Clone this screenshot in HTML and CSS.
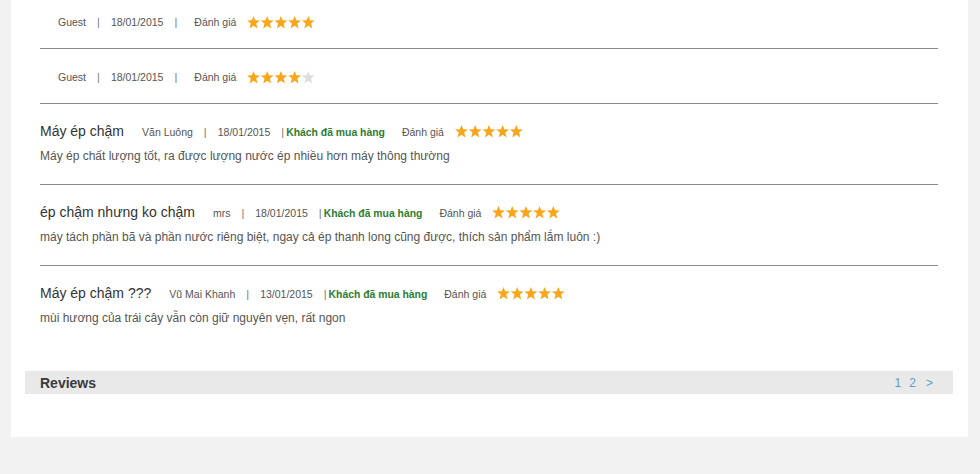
FILE: index.html
```html
<!DOCTYPE html>
<html lang="vi">
<head>
<meta charset="utf-8">
<title>Reviews</title>
<link rel="stylesheet" href="styles.css">
</head>
<body>
<div class="panel">
  <ul class="reviews">
    <li class="review guest first">
      <div class="head">
        <span class="meta indent">Guest</span>
        <span class="sep">|</span>
        <span class="meta">18/01/2015</span>
        <span class="buyer"><span class="bar">|</span></span>
        <span class="meta rate-label">Đánh giá</span>
        <svg class="stars" viewBox="0 0 68 13" width="68" height="13"><use href="#s5"/></svg>
      </div>
    </li>
    <li class="review guest">
      <div class="head">
        <span class="meta indent">Guest</span>
        <span class="sep">|</span>
        <span class="meta">18/01/2015</span>
        <span class="buyer"><span class="bar">|</span></span>
        <span class="meta rate-label">Đánh giá</span>
        <svg class="stars" viewBox="0 0 68 13" width="68" height="13"><use href="#s4"/></svg>
      </div>
    </li>
    <li class="review">
      <div class="head">
        <span class="title">Máy ép chậm</span>
        <span class="meta">Văn Luông</span>
        <span class="sep">|</span>
        <span class="meta">18/01/2015</span>
        <span class="buyer"><span class="bar">|</span>Khách đã mua hàng</span>
        <span class="meta rate-label">Đánh giá</span>
        <svg class="stars" viewBox="0 0 68 13" width="68" height="13"><use href="#s5"/></svg>
      </div>
      <p class="body">Máy ép chất lượng tốt, ra được lượng nước ép nhiều hơn máy thông thường</p>
    </li>
    <li class="review">
      <div class="head">
        <span class="title">ép chậm nhưng ko chậm</span>
        <span class="meta">mrs</span>
        <span class="sep">|</span>
        <span class="meta">18/01/2015</span>
        <span class="buyer"><span class="bar">|</span>Khách đã mua hàng</span>
        <span class="meta rate-label">Đánh giá</span>
        <svg class="stars" viewBox="0 0 68 13" width="68" height="13"><use href="#s5"/></svg>
      </div>
      <p class="body">máy tách phần bã và phần nước riêng biệt, ngay cả ép thanh long cũng được, thích sản phẩm lắm luôn :)</p>
    </li>
    <li class="review last">
      <div class="head">
        <span class="title">Máy ép chậm ???</span>
        <span class="meta">Vũ Mai Khanh</span>
        <span class="sep">|</span>
        <span class="meta">13/01/2015</span>
        <span class="buyer"><span class="bar">|</span>Khách đã mua hàng</span>
        <span class="meta rate-label">Đánh giá</span>
        <svg class="stars" viewBox="0 0 68 13" width="68" height="13"><use href="#s5"/></svg>
      </div>
      <p class="body">mùi hương của trái cây vẫn còn giữ nguyên vẹn, rất ngon</p>
    </li>
  </ul>
  <div class="reviews-bar">
    <span class="bar-title">Reviews</span>
    <nav class="pager"><a href="#">1</a><a href="#">2</a><a href="#" class="next">&gt;</a></nav>
  </div>
</div>

<svg width="0" height="0" class="defs">
  <defs>
    <polygon id="star" points="6.5,0 8.2,4.3 12.9,4.6 9.2,7.6 10.5,12.4 6.5,9.7 2.5,12.4 3.8,7.6 0.1,4.6 4.8,4.3"/>
    <g id="s5" fill="#f9a61b">
      <use href="#star" x="0"/><use href="#star" x="13.7"/><use href="#star" x="27.4"/><use href="#star" x="41.1"/><use href="#star" x="54.8"/>
    </g>
    <g id="s4">
      <g fill="#f9a61b"><use href="#star" x="0"/><use href="#star" x="13.7"/><use href="#star" x="27.4"/><use href="#star" x="41.1"/></g>
      <use href="#star" x="54.8" fill="#dedede"/>
    </g>
  </defs>
</svg>
</body>
</html>
```

FILE: styles.css
```css
html, body {
  margin: 0;
  padding: 0;
  background: #f2f2f2;
  font-family: Arial, "Liberation Sans", sans-serif;
  color: #555;
}

.panel {
  margin-left: 11px;
  width: 957px;
  background: #fff;
  padding: 0 15px 43px 14px;
  box-sizing: border-box;
}

.reviews {
  list-style: none;
  margin: 0 15px;
  padding: 0;
}

.review {
  padding: 19px 0 19px;
  border-bottom: 1px solid #8c8c8c;
}

.review.guest {
  padding: 20px 0 18px;
}

.review.first {
  padding-top: 14px;
}

.review.last {
  border-bottom: none;
}

.head {
  display: flex;
  align-items: baseline;
  height: 16px;
  line-height: 16px;
}

.title {
  font-size: 14px;
  color: #333;
  margin-right: 18px;
}

.meta {
  font-size: 10.5px;
  color: #555;
}

.indent {
  margin-left: 18px;
}

.sep {
  font-size: 11px;
  color: #777;
  margin: 0 11px 0 11px;
}

.buyer {
  font-size: 10.4px;
  font-weight: bold;
  color: #2e7d32;
}

.buyer .bar {
  font-weight: normal;
  font-size: 11px;
  color: #777;
  margin: 0 2px 0 11px;
}

.rate-label {
  margin-left: 17px;
}

.guest .rate-label {
  margin-left: 15px;
}

.stars {
  align-self: center;
  margin-left: 11px;
  display: block;
}

.body {
  margin: 8px 0 0;
  font-size: 12px;
  line-height: 18px;
  color: #555;
}

.reviews-bar {
  margin-top: 25px;
  height: 23px;
  background: #e9e9e9;
  display: flex;
  align-items: center;
  justify-content: space-between;
  padding: 0 20px 0 15px;
}

.bar-title {
  font-size: 14px;
  font-weight: bold;
  color: #3a3a3a;
}

.pager {
  display: flex;
  gap: 8px;
  font-size: 12px;
}

.pager a {
  color: #5f9cc3;
  text-decoration: none;
}

.pager .next {
  margin-left: 2px;
}

.defs {
  position: absolute;
  width: 0;
  height: 0;
}
```
